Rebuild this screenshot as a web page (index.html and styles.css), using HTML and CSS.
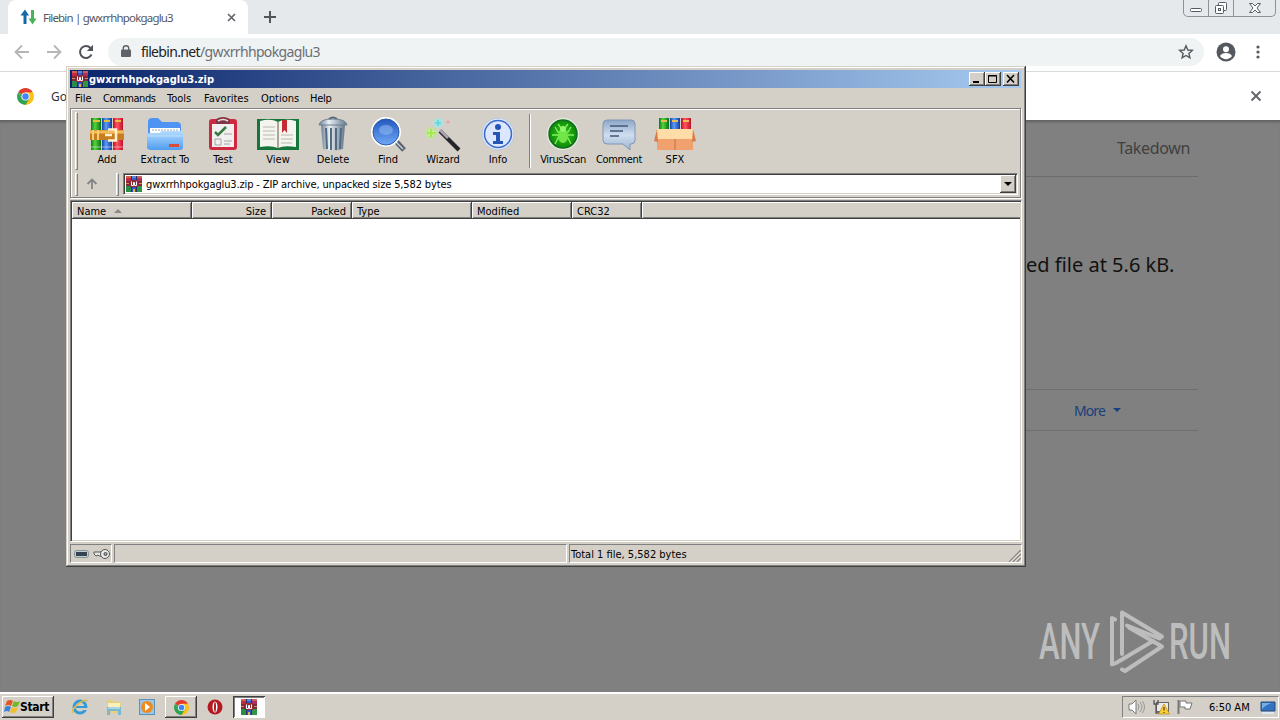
FILE: index.html
```html
<!DOCTYPE html>
<html lang="en">
<head>
    <meta charset="UTF-8">
    <title>Filebin | gwxrrhhpokgaglu3</title>
    <link rel="stylesheet" href="styles.css">
</head>
<body>
    <!-- shared icons -->
    <svg class="defs" width="0" height="0">
        <defs>
            <linearGradient id="steel" x1="0" x2="1"><stop offset="0" stop-color="#6c7f91"/><stop offset=".35" stop-color="#e8eff5"/><stop offset="1" stop-color="#65778a"/></linearGradient>
            <linearGradient id="folder" x1="0" x2="0" y1="0" y2="1"><stop offset="0" stop-color="#b4dbff"/><stop offset="1" stop-color="#4f9df0"/></linearGradient>
            <linearGradient id="lens" x1="0" x2="0" y1="0" y2="1"><stop offset="0" stop-color="#2358c0"/><stop offset="1" stop-color="#6fa8f6"/></linearGradient>
            <linearGradient id="note" x1="0" x2="0" y1="0" y2="1"><stop offset="0" stop-color="#8ba6c8"/><stop offset=".5" stop-color="#d0deef"/><stop offset="1" stop-color="#9bb4d2"/></linearGradient>
            <linearGradient id="rb-g" x1="0" x2="1"><stop offset="0" stop-color="#0b7c17"/><stop offset=".4" stop-color="#55d43c"/><stop offset="1" stop-color="#087014"/></linearGradient>
            <linearGradient id="rb-b" x1="0" x2="1"><stop offset="0" stop-color="#173fa8"/><stop offset=".4" stop-color="#58a0f4"/><stop offset="1" stop-color="#1638a0"/></linearGradient>
            <linearGradient id="rb-r" x1="0" x2="1"><stop offset="0" stop-color="#b90d24"/><stop offset=".4" stop-color="#ff5660"/><stop offset="1" stop-color="#c0102c"/></linearGradient>
            <radialGradient id="bug"><stop offset="0" stop-color="#3fc41c"/><stop offset="1" stop-color="#0a8a0a"/></radialGradient>
        </defs>
        <symbol id="rar" viewBox="0 0 16 16">
            <rect width="16" height="16" fill="#283060"/>
            <path d="M0 0h5v5H0z" fill="#c92840"/><path d="M6 0h4v5H6z" fill="#3c58cc"/><path d="M11 0h5v5h-5z" fill="#b42c62"/>
            <path d="M0 1h5M11 1h5" stroke="#dd9a58"/><path d="M6 1h4" stroke="#72b4e8"/>
            <path d="M0 10h5v6H0z" fill="#278f43"/><path d="M6 10h4v6H6z" fill="#3252bf"/><path d="M11 10h5v6h-5z" fill="#309544"/>
            <path d="M0 5h16v5H0z" fill="#7e2838"/><path d="M0 7.500h3M13 7.500h3" stroke="#d09058"/>
            <path d="M4 4h8v7H4z" fill="#8c2c38"/><path d="M5.500 5.500v4h2v-3h1v3h2v-4" fill="none" stroke="#fff"/>
            <path d="M7 13h2v3H7z" fill="#e2b25b"/>
        </symbol>
        <symbol id="chrome" viewBox="0 0 16 16">
            <path d="M8 8 1.1 4A8 8 0 0 1 14.9 4z" fill="#e33b2e"/>
            <path d="M8 8V4h6.9A8 8 0 0 1 8 16z" fill="#fbc116"/>
            <path d="M8 16 11.5 10 8 8 4.5 10 1.1 4A8 8 0 0 0 8 16z" fill="#30a350"/>
            <path d="M1.1 4 4.5 10 8 8z" fill="#30a350"/>
            <circle cx="8" cy="8" r="3.8" fill="#fff"/><circle cx="8" cy="8" r="3" fill="#4285f4"/>
        </symbol>
    </svg>

    <div class="browser">
        <div class="tabstrip">
            <div class="tab">
                <svg width="18" height="16" viewBox="0 0 18 16"><path d="M5 15V5" stroke="#1268a8" stroke-width="3"/><path d="M0.5 6.5 5 0.5l4 6z" fill="#1268a8"/><path d="M12.5 1v10" stroke="#4ab35a" stroke-width="3"/><path d="M8.5 9.5h8l-4 6z" fill="#4ab35a"/></svg>
                <span class="tab-title">Filebin | gwxrrhhpokgaglu3</span>
                <svg width="9" height="9" viewBox="0 0 9 9"><path d="M1 1l7 7M8 1 1 8" stroke="#5f6368" stroke-width="1.6"/></svg>
            </div>
            <svg class="new-tab" width="12" height="12" viewBox="0 0 12 12"><path d="M6 0v12M0 6h12" stroke="#50555a" stroke-width="2"/></svg>
            <div class="caption">
                <span><svg width="13" height="5" viewBox="0 0 13 5"><rect x=".5" y=".5" width="11" height="3" rx="1" fill="#fff" stroke="#555b66"/></svg></span>
                <span><svg width="14" height="14" viewBox="0 0 14 14"><g fill="#fff" stroke="#555b66"><rect x="4.5" y="1.5" width="8" height="8" rx="1"/><rect x="1.5" y="4.5" width="8" height="8" rx="1"/><rect x="4.5" y="7.5" width="2" height="2"/></g></svg></span>
                <span><svg width="14" height="12" viewBox="0 0 14 12"><path d="M1.5 1.5h3L7 4l2.500-2.500h3L9 6l3.500 4.500h-3L7 8l-2.500 2.500h-3L5 6z" fill="#fff" stroke="#555b66"/></svg></span>
            </div>
        </div>
        <div class="toolbar">
            <svg width="16" height="16" viewBox="0 0 16 16"><path d="M15 8H2M8 1.500 1.500 8 8 14.500" fill="none" stroke="#b4b6b8" stroke-width="1.8"/></svg>
            <svg width="16" height="16" viewBox="0 0 16 16"><path d="M1 8h13M8 1.500 14.500 8 8 14.500" fill="none" stroke="#b4b6b8" stroke-width="1.8"/></svg>
            <svg width="16" height="16" viewBox="0 0 16 16"><path d="M13.500 10.500A6 6 0 1 1 12.500 4" fill="none" stroke="#505459" stroke-width="2"/><path d="M15 .8V7H8.800z" fill="#505459"/></svg>
            <div class="omnibox">
                <svg width="10" height="13" viewBox="0 0 10 13"><rect y="4.500" width="10" height="7.500" rx="1" fill="#5f6368"/><path d="M2.300 5V3.200a2.700 2.500 0 0 1 5.400 0V5" fill="none" stroke="#5f6368" stroke-width="1.400"/></svg>
                <span class="url"><b>filebin.net</b>/gwxrrhhpokgaglu3</span>
                <svg width="16" height="16" viewBox="0 0 16 16"><path d="M8 1.800 9.800 6l4.500.4-3.400 3 1 4.400L8 11.500l-3.900 2.300 1-4.400-3.400-3L6.200 6z" fill="none" stroke="#55595e" stroke-width="1.400"/></svg>
            </div>
            <svg class="avatar" width="20" height="20" viewBox="0 0 20 20"><circle cx="10" cy="10" r="9.500" fill="#55595f"/><circle cx="10" cy="7.200" r="3" fill="#fff"/><path d="M4 14c1-2 3-3 6-3s5 1 6 3c-3 4.200-9 4.200-12 0z" fill="#fff"/></svg>
            <svg width="4" height="14" viewBox="0 0 4 14" fill="#55595f"><circle cx="2" cy="2" r="1.600"/><circle cx="2" cy="7" r="1.600"/><circle cx="2" cy="12" r="1.600"/></svg>
        </div>
        <div class="infobar">
            <svg width="17" height="17"><use href="#chrome"/></svg>
            <span class="infobar-text">Go</span>
            <svg width="12" height="12" viewBox="0 0 12 12"><path d="M1.500 1.500l9 9M10.500 1.500l-9 9" stroke="#5f6368" stroke-width="1.800"/></svg>
        </div>
        <div class="page">
            <div class="page-nav"><span>Takedown</span></div>
            <p class="summary">ed file at 5.6 kB.</p>
            <div class="page-row"><span class="more">More</span><i class="caret"></i></div>
            <svg class="watermark" width="200" height="70" viewBox="0 0 200 70">
                <g class="wm-text" fill="#bdbdbd">
                    <text x="4" y="54" textLength="61" lengthAdjust="spacingAndGlyphs">ANY</text>
                    <text x="134" y="54" textLength="62" lengthAdjust="spacingAndGlyphs">RUN</text>
                </g>
                <g fill="none" stroke="#bdbdbd" stroke-width="4" stroke-linejoin="round" stroke-linecap="round">
                    <path d="M80 14.500 77 13V59.500l4-1.500 37-22"/>
                    <path d="M87 49V7.500L127 31.500l-2.500 2L92 20.500"/>
                    <path d="M94 22.500l33 19-37 24.500-3-1.500"/>
                </g>
            </svg>
        </div>
    </div>

    <div class="window">
        <div class="titlebar">
            <svg width="16" height="16"><use href="#rar"/></svg>
            <span class="title">gwxrrhhpokgaglu3.zip</span>
            <div class="win-btn"><svg width="12" height="10" viewBox="0 0 12 10"><path d="M2 8h6" stroke="#000" stroke-width="2"/></svg></div>
            <div class="win-btn"><svg width="12" height="10" viewBox="0 0 12 10"><path d="M1.500 1.500h8v7h-8zM1 2h9" fill="none" stroke="#000"/></svg></div>
            <div class="win-btn close"><svg width="12" height="10" viewBox="0 0 12 10"><path d="M2 1l7 7.500M9 1 2 8.500" stroke="#000" stroke-width="1.600"/></svg></div>
        </div>
        <div class="menu">
            <span class="m-file">File</span><span class="m-cmd">Commands</span><span class="m-tools">Tools</span><span class="m-fav">Favorites</span><span class="m-opt">Options</span><span class="m-help">Help</span>
        </div>
        <div class="rebar">
            <div class="tools">
                <i class="grip"></i>
                <div class="tool"><svg width="36" height="36" viewBox="0 0 36 36"><path d="M2 2h10v32H2z" fill="url(#rb-g)"/><path d="M13 2h10v32H13z" fill="url(#rb-b)"/><path d="M24 2h10v32H24z" fill="url(#rb-r)"/><path d="M2 31h32" stroke="#fff" stroke-opacity=".25" stroke-width="2"/><path d="M4 5h7M15 5h6M26 5h6" stroke="#e5bd42" stroke-width="2"/><path d="M1 14h34v10H1z" fill="#c77d20"/><path d="M1 16h34" stroke="#f4bd57" stroke-width="3"/><path d="M4 14v10M9 14v10" stroke="#f5cf73" stroke-width="2"/><path d="M19 13.500h8v11h-8M16 19h7" fill="none" stroke="#fff1d0" stroke-width="2.500"/></svg>Add</div>
                <div class="tool"><svg width="38" height="36" viewBox="0 0 38 36"><path d="M2 6q0-4 4-4h6l4 4h15q4 0 4 4v14H2z" fill="#4f94f2"/><path d="M4 12h30v12H4z" fill="#fff"/><path d="M6 14h26" stroke="#9ca9ba" stroke-dasharray="2 1"/><path d="M1 19q0-2 3-2h9l3-2h18q3 0 3 3v13q0 3-3 3H5q-4 0-4-3z" fill="url(#folder)"/><path d="M2 20h34" stroke="#d6ecff" stroke-opacity=".7"/><rect x="23" y="28" width="10" height="3" fill="#da4b3a"/></svg>Extract To</div>
                <div class="tool"><svg width="30" height="36" viewBox="0 0 30 36"><rect x="1" y="3" width="28" height="31" rx="3" fill="#ce2941"/><path d="M4 8h22v23H4z" fill="#f2f0ef"/><path d="M8 3q7-4 14 0v5H8z" fill="#813743"/><path d="M10 5q5-3 10 0" fill="none" stroke="#efdde0" stroke-width="1.500"/><path d="m7 16 3 3 8-8" fill="none" stroke="#367944" stroke-width="2.500"/><path d="M16 18h8M16 25h8M16 28h6" stroke="#a5a2aa"/><path d="M7 23h6v6H7z" fill="none" stroke="#a5a2aa"/></svg>Test</div>
                <div class="tool"><svg width="42" height="36" viewBox="0 0 42 36"><path d="M0 3h42v31H0z" fill="#16753b"/><path d="M3 5q11-3 18 1 7-4 18-1v26q-12-2-18 1-7-3-18-1z" fill="#f5f5ef"/><path d="M21 6v26" stroke="#aaa595" stroke-width="2"/><path d="M6 11h12M6 15h12M6 19h12M6 23h12M24 19h12M24 23h12M24 27h11" stroke="#b9b8ac"/><path d="M25 4h5v13l-2.500-3-2.500 3z" fill="#c42a32"/></svg>View</div>
                <div class="tool"><svg width="32" height="36" viewBox="0 0 32 36"><path d="M12 3q4-3 8 0" fill="none" stroke="#566779" stroke-width="2"/><path d="M4 9h24l-2 24q-10 3-20 0z" fill="url(#steel)"/><path d="M9 12l1 21M14 12v22M19 12v22M24 12l-1 21" stroke="#526b80" stroke-width="2"/><path d="M2 9q1-6 14-6t14 6z" fill="url(#steel)" stroke="#6d7e8d"/></svg>Delete</div>
                <div class="tool"><svg width="36" height="36" viewBox="0 0 36 36"><path d="m25 24 9 10" stroke="#576270" stroke-width="5"/><path d="m25 25 8 8" stroke="#c6d0d8" stroke-width="1.500"/><circle cx="16" cy="16" r="15" fill="#fff"/><circle cx="16" cy="16" r="13" fill="url(#lens)" stroke="#2859ac"/><ellipse cx="16" cy="14" rx="7" ry="5" fill="#96bcf5" opacity=".55"/></svg>Find</div>
                <div class="tool"><svg width="36" height="36" viewBox="0 0 36 36"><path d="M15 15l19 19" stroke="#24242a" stroke-width="4"/><path d="M15 14l8 8" stroke="#aaa5ad" stroke-width="3"/><circle cx="6" cy="17" r="6" fill="#b5ed81" opacity=".6"/><circle cx="6" cy="17" r="3" fill="#c8f78e"/><path d="M6 13v8M2 17h8" stroke="#a6e554" stroke-width="2"/><circle cx="13" cy="7" r="5" fill="#9ceaea" opacity=".7"/><path d="M13 4v6M10 7h6" stroke="#63dae0" stroke-width="2"/><path d="M23 4v4M21 6h4" stroke="#ee9aac"/></svg>Wizard</div>
                <div class="tool"><svg width="34" height="36" viewBox="0 0 34 36"><circle cx="17" cy="18" r="16" fill="#e3ebfb" stroke="#b9c8e3"/><circle cx="17" cy="18" r="13.500" fill="#dce7ff" stroke="#3869c8" stroke-width="1.500"/><circle cx="17" cy="11" r="3" fill="#2456b8"/><path d="M12 16h7v9h3v3H12v-3h3v-6h-3z" fill="#2456b8"/></svg>Info</div>
                <i class="divider"></i>
                <div class="tool tight"><svg width="34" height="36" viewBox="0 0 34 36"><circle cx="17" cy="18" r="16" fill="#e4f0e0"/><circle cx="17" cy="18" r="14" fill="url(#bug)" stroke="#136b20" stroke-width="1.500"/><g stroke="#80f15d" stroke-width="1.300" fill="none"><path d="m12 8 3 4m7-4-3 4M9 11l3 5h10l3-5M6 19h22M9 28l3-6h10l3 6"/></g><ellipse cx="17" cy="20" rx="5" ry="7" fill="#72e547"/><circle cx="17" cy="13" r="3" fill="#8df46b"/></svg>VirusScan</div>
                <div class="tool tight"><svg width="34" height="36" viewBox="0 0 34 36"><path d="M5 4h24q4 0 4 4v16q0 4-4 4h-1v6l-7-6H5q-4 0-4-4V8q0-4 4-4z" fill="url(#note)" stroke="#8096b5"/><path d="M8 10h18M8 15h13M8 20h9" stroke="#405877" stroke-width="1.600"/></svg>Comment</div>
                <div class="tool"><svg width="42" height="36" viewBox="0 0 42 36"><path d="M5 2h10v13H5z" fill="url(#rb-g)"/><path d="M16 2h10v13H16z" fill="url(#rb-b)"/><path d="M27 2h10v13H27z" fill="url(#rb-r)"/><path d="M7 5h6M18 5h6M29 5h6" stroke="#e9bf55" stroke-width="2"/><path d="M3 20h36v14H3z" fill="#f0a16d"/><path d="M3 13h36l2 10H1z" fill="#ffdca8"/><path d="M3 13 0 25l4 1M39 13l3 12-4 1" fill="#d57c4b"/><path d="M21 23v11" stroke="#bd714f"/></svg>SFX</div>
            </div>
            <div class="address">
                <i class="grip"></i>
                <svg class="up" width="14" height="14" viewBox="0 0 14 14"><path d="M7 12V3M2.500 7 7 2.500 11.500 7" fill="none" stroke="#858585" stroke-width="1.800"/></svg>
                <i class="grip"></i>
                <div class="combo">
                    <svg width="16" height="16"><use href="#rar"/></svg>
                    <span class="path">gwxrrhhpokgaglu3.zip - ZIP archive, unpacked size 5,582 bytes</span>
                    <div class="drop"><i></i></div>
                </div>
            </div>
        </div>
        <div class="list">
            <div class="columns">
                <span>Name<i class="sort"></i></span>
                <span class="num">Size</span>
                <span class="num">Packed</span>
                <span>Type</span>
                <span>Modified</span>
                <span>CRC32</span>
                <span></span>
            </div>
        </div>
        <div class="status">
            <div class="cell">
                <svg width="16" height="10" viewBox="0 0 16 10"><rect x=".5" y="1.500" width="14" height="7" rx="2" fill="#c0ced2" stroke="#879597"/><rect x="2" y="3" width="11" height="4" fill="#344450"/></svg>
                <svg width="18" height="12" viewBox="0 0 18 12"><path d="M1 4h8v4H6L5 7 3 8 1 6z" fill="#e8e8e8" stroke="#555"/><circle cx="12" cy="6" r="4.500" fill="#e8e8e8" stroke="#555"/><circle cx="12.500" cy="6" r="1.500" fill="#aaa" stroke="#444"/></svg>
            </div>
            <div class="cell"></div>
            <div class="cell total"><span>Total 1 file, 5,582 bytes</span>
                <svg width="12" height="12" viewBox="0 0 12 12"><path d="M0 12 12 0M4 12l8-8M8 12l4-4" stroke="#888480" stroke-width="1.500"/><path d="M1.500 12 12 1.500M5.500 12 12 5.500M9.500 12 12 9.500" stroke="#fff" stroke-width=".7"/></svg>
            </div>
        </div>
    </div>

    <div class="taskbar">
        <div class="start">
            <svg width="17" height="16" viewBox="0 0 17 16"><path d="M3 2q3-2 6 0L7 7q-3-2-6 0z" fill="#e45425"/><path d="M10 2q3 2 6 0l-2 5q-3 2-6 0z" fill="#74b62c"/><path d="M1 8q3-2 6 0l-2 5q-2-2-5 0z" fill="#3d83d5"/><path d="M8 8q3 2 6 0l-2 5q-3 2-6 0z" fill="#f5bc2b"/></svg>
            <span>Start</span>
        </div>
        <div class="quick">
            <svg width="18" height="18" viewBox="0 0 18 18"><circle cx="9" cy="9" r="6" fill="none" stroke="#349ad6" stroke-width="3"/><path d="M5 9h10" stroke="#349ad6" stroke-width="2"/><path d="M12 11h5" stroke="#d4d0c8" stroke-width="2"/><path d="M2 15C-1 11 13 0 17 3" fill="none" stroke="#e2bb45" stroke-width="1.500"/></svg>
            <svg width="18" height="18" viewBox="0 0 18 18"><path d="M2 2h6l1 2h7v11H2z" fill="#e8cf77"/><path d="M3 5h12v4H3z" fill="#f9f0be"/><path d="M2 9h14v8h-3v-4H5v4H2z" fill="#78b9cf"/><path d="M3 10h12" stroke="#d7f2f5"/></svg>
            <svg width="16" height="16" viewBox="0 0 16 16"><rect x=".5" y=".5" width="15" height="15" fill="#9bc6e8" stroke="#5c91b9"/><circle cx="8" cy="8" r="6" fill="#ee8b20"/><path d="m6 4 5 4-5 4z" fill="#fff"/></svg>
            <div class="task"><svg width="15" height="15"><use href="#chrome"/></svg></div>
            <svg width="16" height="16" viewBox="0 0 16 16"><circle cx="8" cy="8" r="7.500" fill="#b51922"/><ellipse cx="8" cy="8" rx="2.500" ry="5.500" fill="#fff"/><ellipse cx="8" cy="8" rx="1" ry="5" fill="#a82024"/></svg>
            <div class="task active"><svg width="16" height="16"><use href="#rar"/></svg></div>
        </div>
        <div class="tray">
            <svg width="18" height="16" viewBox="0 0 18 16"><path d="M1 5h3l4-4v14l-4-4H1z" fill="#fff" stroke="#7a7a7a"/><path d="M10 5q2 3 0 6M12 3q4 5 0 10M14.500 2q4 6 0 12" fill="none" stroke="#999"/></svg>
            <svg width="17" height="16" viewBox="0 0 17 16"><rect x="3.500" y="3.500" width="12" height="9" fill="#e9e9e9" stroke="#666"/><path d="M1 1v4h4V1M3 5v9h4" fill="none" stroke="#555" stroke-width="1.300"/><path d="m11 5 5.500 10h-11z" fill="#ffcf32" stroke="#b98b20" stroke-width=".7"/><path d="M11 8v3.500M11 13v1" stroke="#222"/></svg>
            <svg width="17" height="16" viewBox="0 0 17 16"><path d="M1.500 1v14" stroke="#777" stroke-width="2"/><path d="M3 2h6v2h6l-2 6H8V8H3z" fill="#fff" stroke="#777"/></svg>
            <span class="clock">6:50 AM</span>
            <svg width="16" height="15" viewBox="0 0 16 15"><path d="M1 2h14v9H1z" fill="#3272c2" stroke="#284d79"/><path d="M2 3h10q-5 1-10 6z" fill="#73aee4"/><path d="M2 13h12" stroke="#dce8f4" stroke-width="2"/></svg>
        </div>
    </div>
</body>
</html>
```
FILE: styles.css
```css
* { box-sizing: border-box; }

body {
    margin: 0;
    width: 1280px;
    height: 720px;
    overflow: hidden;
    position: relative;
    display: flex;
    flex-direction: column;
    font-family: "DejaVu Sans Condensed", "DejaVu Sans", sans-serif;
    font-stretch: condensed;
    font-size: 11px;
    color: #000;
}

svg { display: block; flex: none; }
.defs { position: absolute; }

/* browser */
.browser {
    height: 692px;
    display: flex;
    flex-direction: column;
    background: #fff;
}

.tabstrip {
    height: 34px;
    flex: none;
    display: flex;
    background: #e5e9ec;
    padding-left: 8px;
}

.tab {
    width: 240px;
    height: 34px;
    background: #fff;
    border-radius: 8px 8px 0 0;
    display: flex;
    align-items: center;
    padding: 0 12px 0 12px;
}

.tab-title {
    flex: 1;
    margin-left: 5px;
    font-family: "Noto Sans", sans-serif;
    font-stretch: normal;
    font-size: 11.5px;
    letter-spacing: -0.82px;
    color: #55585c;
    white-space: nowrap;
}

.new-tab { margin: 11px 0 0 16px; }

.caption {
    margin: 0 4px 0 auto;
    height: 17px;
    width: 93px;
    display: grid;
    grid-template-columns: 25px 25px 1fr;
    border: 1px solid #8d9298;
    border-top: 0;
    border-radius: 0 0 5px 5px;
}

.caption span {
    display: flex;
    align-items: center;
    justify-content: center;
    border-right: 1px solid #8d9298;
}

.caption span:first-child { padding-top: 4px; }
.caption span:last-child { border: 0; }

.toolbar {
    height: 38px;
    flex: none;
    display: flex;
    align-items: center;
    gap: 16px;
    padding: 0 20px 2px 14px;
    border-bottom: 1px solid #d8dadc;
}

.omnibox {
    flex: 1;
    height: 28px;
    margin-left: -2px;
    border-radius: 14px;
    background: #f0f3f4;
    display: flex;
    align-items: center;
    padding: 0 10px 0 13px;
}

.url {
    flex: 1;
    margin-left: 10px;
    font-family: "Noto Sans", sans-serif;
    font-stretch: normal;
    font-size: 14px;
    letter-spacing: -0.65px;
    color: #6b6f74;
}

.url b { font-weight: normal; color: #202124; }
.avatar { margin: 0 4px 0 -4px; }

.infobar {
    height: 48px;
    flex: none;
    display: flex;
    align-items: center;
    padding: 0 18px 0 17px;
}

.infobar-text {
    flex: 1;
    margin-left: 17px;
    font-family: "Noto Sans", sans-serif;
    font-stretch: normal;
    font-size: 12px;
    color: #333;
}

.page {
    flex: 1;
    background: #808080;
    box-shadow: inset 0 4px 3px -2px #606060;
    padding: 0 82px 0 1024px;
    display: flex;
    flex-direction: column;
    font-family: "Noto Sans", sans-serif;
    font-stretch: normal;
}

.page-nav {
    height: 57px;
    border-bottom: 1px solid #6c6c6c;
    text-align: right;
    padding: 16px 8px 0 0;
    font-size: 16px;
    letter-spacing: -0.35px;
    line-height: 24px;
    color: #404040;
}

.summary {
    margin: 73px 0 0 2px;
    font-size: 20px;
    line-height: 30px;
    color: #111;
    white-space: nowrap;
}

.page-row {
    height: 42px;
    margin-top: 109px;
    border: solid #6f6f6f;
    border-width: 1px 0;
    padding-left: 50px;
    display: flex;
    align-items: center;
    font-size: 14px;
    color: #193f7c;
}

.more { letter-spacing: -0.9px; }

.caret {
    margin-left: 8px;
    border: 4px solid transparent;
    border-top-color: #193f7c;
    border-bottom: 0;
}

.watermark { margin: 174px 0 0 11px; overflow: visible; }
.wm-text { font: 500 50px Roboto, sans-serif; }

/* archive window */
.window {
    position: absolute;
    left: 66px;
    top: 66px;
    width: 960px;
    height: 501px;
    padding: 4px;
    background: #d4d0c8;
    box-shadow: inset -1px -1px #404040, inset 1px 1px #d4d0c8, inset -2px -2px #808080, inset 2px 2px #fff;
    display: flex;
    flex-direction: column;
}

.titlebar {
    height: 18px;
    flex: none;
    display: flex;
    align-items: center;
    padding: 0 2px;
    margin-right: 1px;
    background: linear-gradient(90deg, #0a246a, #a6caf0);
}

.title {
    flex: 1;
    margin-left: 1px;
    color: #fff;
    font-weight: bold;
}

.win-btn {
    width: 16px;
    height: 14px;
    padding: 2px;
    background: #d4d0c8;
    box-shadow: inset -1px -1px #404040, inset 1px 1px #fff, inset -2px -2px #808080;
}

.close { margin-left: 2px; }

.menu {
    height: 20px;
    flex: none;
    display: flex;
    align-items: center;
    padding-left: 5px;
}

.m-file { width: 28px; }
.m-cmd { width: 64px; letter-spacing: -0.45px; }
.m-tools { width: 37px; }
.m-fav { width: 57px; }
.m-opt { width: 49px; }
.m-help { letter-spacing: -0.3px; }

.rebar {
    height: 90px;
    flex: none;
    border: 1px solid #808080;
    box-shadow: inset 1px 1px #fff, 1px 1px #fff;
    margin-right: 1px;
}

.grip {
    width: 3px;
    border: 1px solid;
    border-color: #fff #808080 #808080 #fff;
}

.tools {
    height: 64px;
    display: grid;
    grid-template-columns: 3px 58px 58px 58px 52px 58px 52px 58px 52px 12px 54px 58px 54px;
    padding-left: 4px;
}

.tools .grip { margin: 3px 0; }

.tool {
    display: flex;
    flex-direction: column;
    align-items: center;
    padding-top: 7px;
    line-height: 15px;
    white-space: nowrap;
}

.tight { letter-spacing: -0.35px; }

.divider {
    margin: 5px;
    border-left: 1px solid #808080;
    border-right: 1px solid #fff;
}

.address {
    height: 23px;
    display: flex;
    padding: 0 2px 0 4px;
}

.up { margin: 4px 17px 0 7px; }

.combo {
    flex: 1;
    height: 22px;
    margin-left: 4px;
    background: #fff;
    border: 1px solid;
    border-color: #808080 #fff #fff #808080;
    box-shadow: inset 1px 1px #404040, inset -1px -1px #d4d0c8;
    display: flex;
    align-items: center;
    padding: 1px 1px 1px 2px;
}

.path {
    flex: 1;
    margin-left: 4px;
    padding-top: 1px;
    letter-spacing: -0.13px;
}

.drop {
    width: 16px;
    height: 18px;
    background: #d4d0c8;
    box-shadow: inset -1px -1px #404040, inset 1px 1px #fff, inset -2px -2px #808080;
    display: flex;
    align-items: center;
    justify-content: center;
}

.drop i {
    border: 4px solid transparent;
    border-top-color: #000;
    border-bottom: 0;
}

.list {
    height: 342px;
    flex: none;
    margin-top: 2px;
    background: #fff;
    border: 1px solid;
    border-color: #808080 #fff #fff #808080;
    box-shadow: inset 1px 1px #404040, inset -1px -1px #d4d0c8;
    padding: 1px;
}

.columns {
    height: 17px;
    display: grid;
    grid-template-columns: 120px 80px 80px 120px 100px 70px 1fr;
}

.columns span {
    background: #d4d0c8;
    box-shadow: inset -1px -1px #404040, inset 1px 1px #fff, inset -2px -2px #808080;
    padding: 1px 6px 0 5px;
    display: flex;
    align-items: center;
}

.columns .num { justify-content: flex-end; }
.columns span:last-child { box-shadow: inset 0 -1px #404040, inset 1px 1px #fff, inset 0 -2px #808080; }

.sort {
    margin-left: 8px;
    border: 4px solid transparent;
    border-bottom-color: #888;
    border-top: 0;
}

.status {
    flex: 1;
    display: grid;
    grid-template-columns: 42px 453px 1fr;
    gap: 2px;
    padding-top: 2px;
}

.cell {
    border: 1px solid;
    border-color: #808080 #fff #fff #808080;
    display: flex;
    align-items: center;
    gap: 3px;
    padding-left: 3px;
}

.total { justify-content: space-between; padding-left: 1px; }
.total span { padding-top: 1px; }
.total svg { align-self: flex-end; }

/* taskbar */
.taskbar {
    height: 28px;
    background: #d4d0c8;
    box-shadow: inset 0 2px #fff, inset 0 1px #d4d0c8;
    display: flex;
    align-items: center;
    padding: 2px 0 0 2px;
}

.start {
    width: 52px;
    height: 22px;
    box-shadow: inset -1px -1px #404040, inset 1px 1px #fff, inset -2px -2px #808080;
    display: flex;
    align-items: center;
    padding-left: 2px;
    font-size: 12px;
    font-weight: bold;
    letter-spacing: -0.3px;
}

.start span { margin-left: -1px; }

.quick {
    display: flex;
    align-items: center;
    margin-left: 17px;
    gap: 16px;
}

.task {
    width: 32px;
    height: 22px;
    margin: 0 -6px;
    display: flex;
    align-items: center;
    justify-content: center;
    box-shadow: inset -1px -1px #404040, inset 1px 1px #fff, inset -2px -2px #808080;
}

.active {
    background: #fff;
    box-shadow: inset 1px 1px #404040, inset -1px -1px #fff, inset 2px 2px #808080;
}

.tray {
    width: 157px;
    height: 22px;
    margin-left: auto;
    margin-right: 1px;
    border: 1px solid;
    border-color: #808080 #fff #fff #808080;
    display: flex;
    align-items: center;
    gap: 7px;
    padding-left: 5px;
}

.clock { margin: 0 3px 0 8px; white-space: nowrap; }
```
